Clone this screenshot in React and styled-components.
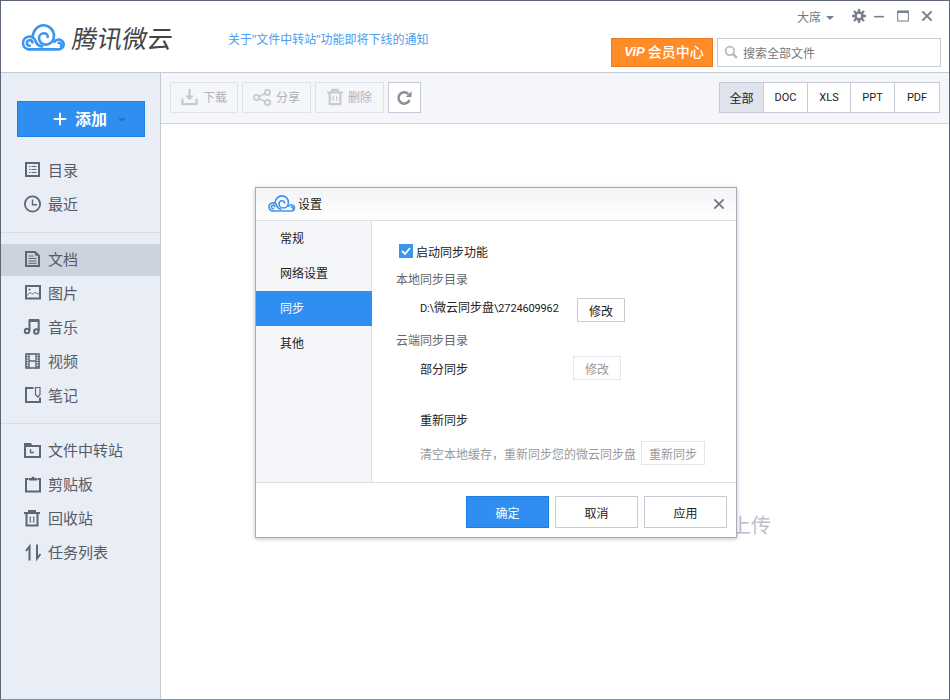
import React from 'react'
import styled, { createGlobalStyle } from 'styled-components'

const GlobalStyle = createGlobalStyle`
  html, body {
    margin: 0;
    padding: 0;
    background: #fff;
  }
  * {
    box-sizing: border-box;
  }
`

const CloudLogo = ({ width }) => (
  <svg width={width} viewBox="0 0 43 27" fill="none" stroke="#3c95ee" strokeWidth="2.6" strokeLinecap="round" style={{ overflow: 'visible' }}>
    <path d="M6.5 25.4H36.5a5 5 0 1 0-5-7.6" />
    <path d="M38 22.400a2.200 2.200 0 0 0-2.400-3.400" />
    <path d="M9.500 13.500C10 6 15 1.300 20.500 1.300c6 0 10.500 5 10.500 10.700 0 5-3.700 8.700-8 8.700-4 0-7-3-7-6.500 0-3 2.400-5 4.800-5 2.300 0 3.900 1.700 3.900 3.700" />
    <path d="M6.500 25.400a6.400 6.400 0 1 1 6-8.400c1 3 3.500 5 6.500 5.600" />
    <path d="M6.700 21.800a2.800 2.800 0 1 1 2.700-3.400" />
  </svg>
)

const Glyph = ({ size = 18, children, color = '#5f6675', sw = 2 }) => (
  <svg width={size} height={size} viewBox="0 0 18 18" fill="none" stroke={color} strokeWidth={sw} style={{ overflow: 'visible', flexShrink: 0 }}>
    {children}
  </svg>
)

const C = '#5f6675'

const icons = {
  list: <><rect x="2" y="2" width="13" height="13" /><path d="M5 5.500h1.500M5 8.500h1.500M5 11.500h1.500M7.500 5.500h5M7.500 8.500h5M7.500 11.500h5" strokeWidth="1" /></>,
  clock: <><circle cx="8.500" cy="9" r="7.600" strokeWidth="1.800" /><path d="M8.500 4.500v5.300H13" strokeWidth="1.400" /></>,
  doc: <><path d="M2 2h8.500L15 6v10H2z" /><path d="M11 .8l5 4.700h-5z" fill={C} stroke="none" /><path d="M4.500 6h5M4.500 8.500h8M4.500 11h8M4.500 13.300h8" strokeWidth="1" /></>,
  image: <><rect x="2" y="2" width="14" height="12.500" /><path d="M3.500 11.500c1-1 1.500-3 2.500-3s1.500 1.500 2.500 1.500 1.500-1.500 2.500-1.500 2 1.500 4 1.500" strokeWidth="1" /><circle cx="5.500" cy="5.500" r="1" fill={C} stroke="none" /></>,
  music: <><path d="M5.500 13V2.500h9.200V13" /><path d="M5 2.500h10" strokeWidth="3" /><circle cx="3" cy="13" r="2.200" /><circle cx="12.300" cy="13.500" r="2.200" /></>,
  film: <><rect x="2" y="2" width="13" height="14" strokeWidth="1.600" /><path d="M5 1.500v15M12 1.500v15M5 9h7" strokeWidth="1.400" /><path d="M1.500 4.500h3M1.500 7h3M1.500 9.500h3M1.500 12h3M1.500 14.500h3M12.500 4.500h3M12.500 7h3M12.500 9.500h3M12.500 12h3M12.500 14.500h3" strokeWidth="1" /></>,
  note: <><path d="M9.500 2H2v14h14v-4.500" /><path d="M11.500 1.500h4.500v7l-2.250 2.500-2.250-2.500z" strokeWidth="1.200" /></>,
  folder: <><path d="M1 5h15v11H1z" /><path d="M0 2h7l2 3.500H0z" fill={C} stroke="none" /><path d="M6.500 8v3.500h3.500" strokeWidth="1.300" /></>,
  clip: <><path d="M4.500 4H2v12.500h14V4h-2.500" /><path d="M5 5.500V3h2.500a1.500 1.500 0 0 1 3 0H13v2.500z" fill={C} stroke="none" /></>,
  trash: <><path d="M0 4h16M5 4V2h6v2M2.500 4v12.500h11V4" /><path d="M6.300 7.500v6M9.700 7.500v6" strokeWidth="1.200" /></>,
  tasks: <><path d="M5.500 17.500V3.500L2 8" strokeWidth="2" /><path d="M13 1.500v14L16.500 11" strokeWidth="2" /></>,
}

const menuTop = [
  { icon: 'list', label: '目录' },
  { icon: 'clock', label: '最近' },
]
const menuTypes = [
  { icon: 'doc', label: '文档', active: true },
  { icon: 'image', label: '图片' },
  { icon: 'music', label: '音乐' },
  { icon: 'film', label: '视频' },
  { icon: 'note', label: '笔记' },
]
const menuTools = [
  { icon: 'folder', label: '文件中转站' },
  { icon: 'clip', label: '剪贴板' },
  { icon: 'trash', label: '回收站' },
  { icon: 'tasks', label: '任务列表' },
]

const MenuGroup = ({ items }) => (
  <Group>
    {items.map((item) => (
      <MenuItem key={item.label} $active={item.active}>
        <Glyph>{icons[item.icon]}</Glyph>
        <MenuLabel>{item.label}</MenuLabel>
      </MenuItem>
    ))}
  </Group>
)

const App = () => {
  return (
    <Window>
      <GlobalStyle />
      <Header>
        <LogoBox>
          <CloudLogo width={43} />
          <LogoText>腾讯微云</LogoText>
        </LogoBox>
        <Notice>关于"文件中转站"功能即将下线的通知</Notice>
        <HeaderRight>
          <WinBar>
            <UserName>大席</UserName>
            <Caret />
            <WinButtons>
              <Glyph size={14} color="#7a808c" sw={3.5}>
                <circle cx="9" cy="9" r="4.500" />
                <path d="M9 0v4M9 14v4M0 9h4M14 9h4M2.600 2.600l2.800 2.800M12.600 12.600l2.800 2.800M2.600 15.400l2.800-2.800M12.600 5.400l2.800-2.800" strokeWidth="3" />
              </Glyph>
              <Glyph size={12} color="#7a808c" sw={2.400}><path d="M0 10h15" /></Glyph>
              <Glyph size={12} color="#7a808c" sw={1.600}><rect x="1" y="1.500" width="16" height="15" /><path d="M1 3h16" strokeWidth="3" /></Glyph>
              <Glyph size={12} color="#7a808c" sw={3}><path d="M2 2l14 14M16 2L2 16" /></Glyph>
            </WinButtons>
          </WinBar>
          <ActionBar>
            <VipButton><VipMark>ViP</VipMark>会员中心</VipButton>
            <SearchBox>
              <Glyph size={14} color="#b5b8bf" sw={2.200}><circle cx="7.500" cy="7.500" r="5.500" /><path d="M11.500 11.500l5 5" strokeWidth="3" /></Glyph>
              <span>搜索全部文件</span>
            </SearchBox>
          </ActionBar>
        </HeaderRight>
      </Header>
      <Body>
        <Sidebar>
          <AddButton>
            <Glyph size={14} color="#fff" sw={2.400}><path d="M9 1v16M1 9h16" /></Glyph>
            <AddLabel>添加</AddLabel>
            <AddCaret />
          </AddButton>
          <MenuGroup items={menuTop} />
          <MenuGroup items={menuTypes} />
          <MenuGroup items={menuTools} />
        </Sidebar>
        <Main>
          <Toolbar>
            <ToolButton $w={68}>
              <Glyph size={17} color="#c6c9cf" sw={2.400}><path d="M1.500 11v6h15v-6" /><path d="M9 1v9" /><path d="M4.500 8h9L9 13z" fill="#c6c9cf" stroke="none" /></Glyph>
              下载
            </ToolButton>
            <ToolButton>
              <Glyph color="#c6c9cf" sw={1.800}><circle cx="3.500" cy="9.500" r="2.600" /><circle cx="14.500" cy="4.500" r="2.600" /><circle cx="14.500" cy="14.500" r="2.600" /><path d="M6 8.500l6-3M6 10.500l6 3" strokeWidth="1.400" /></Glyph>
              分享
            </ToolButton>
            <ToolButton>
              <Glyph size={16} color="#c6c9cf" sw={2.400}><path d="M0 4h18M6 3.500V1h6v2.500M3 4v13h12V4" /><path d="M7 7.500v6M11 7.500v6" strokeWidth="1.400" /></Glyph>
              删除
            </ToolButton>
            <RefreshButton>
              <Glyph size={15} color="#8b8f98" sw={3}>
                <path d="M15 12A6.800 6.800 0 1 1 13.500 4.800" />
                <path d="M17.500 1.500V8.500h-7z" fill="#8b8f98" stroke="none" />
              </Glyph>
            </RefreshButton>
            <FilterGroup>
              <FilterTab $active $w={45}>全部</FilterTab>
              <FilterTab $w={45}>DOC</FilterTab>
              <FilterTab $w={44}>XLS</FilterTab>
              <FilterTab $w={45}>PPT</FilterTab>
              <FilterTab $w={46}>PDF</FilterTab>
            </FilterGroup>
          </Toolbar>
          <Empty>
            <EmptyText>上传</EmptyText>
          </Empty>
        </Main>
      </Body>

      <Dialog>
        <DialogTitle>
          <CloudLogo width={27} />
          <span>设置</span>
          <DialogClose>
            <Glyph size={12} color="#6f7682" sw={2.600}><path d="M2 2l14 14M16 2L2 16" /></Glyph>
          </DialogClose>
        </DialogTitle>
        <DialogBody>
          <DialogNav>
            <NavItem>常规</NavItem>
            <NavItem>网络设置</NavItem>
            <NavItem $active>同步</NavItem>
            <NavItem>其他</NavItem>
          </DialogNav>
          <DialogContent>
            <CheckRow>
              <CheckBox>
                <svg width="10" height="10" viewBox="0 0 10 10" fill="none" stroke="#fff" strokeWidth="1.800">
                  <path d="M1 5l3 3 5-6" />
                </svg>
              </CheckBox>
              启动同步功能
            </CheckRow>
            <SectionLabel>本地同步目录</SectionLabel>
            <PathRow>
              <PathText><Latin>D:\</Latin>微云同步盘<Latin>\2724609962</Latin></PathText>
              <SmallButton>修改</SmallButton>
            </PathRow>
            <SectionLabel $top={9}>云端同步目录</SectionLabel>
            <PartRow>
              <PartLabel>部分同步</PartLabel>
              <SmallButton $disabled>修改</SmallButton>
            </PartRow>
            <ResyncTitle>重新同步</ResyncTitle>
            <ResyncRow>
              <ResyncHint>清空本地缓存，重新同步您的微云同步盘</ResyncHint>
              <SmallButton $disabled $w={64}>重新同步</SmallButton>
            </ResyncRow>
          </DialogContent>
        </DialogBody>
        <DialogFooter>
          <FooterButton $primary>确定</FooterButton>
          <FooterButton>取消</FooterButton>
          <FooterButton>应用</FooterButton>
        </DialogFooter>
      </Dialog>
    </Window>
  )
}

const Window = styled.div`
  position: relative;
  width: 950px;
  height: 700px;
  overflow: hidden;
  display: flex;
  flex-direction: column;
  border: 1px solid #5d6676;
  border-bottom-color: #8b919c;
  background: #fff;
  font-family: "Noto Sans CJK SC", "Noto Sans", sans-serif;
  font-size: 12px;
  color: #333;
`

const Header = styled.header`
  height: 72px;
  flex-shrink: 0;
  display: flex;
  border-bottom: 1px solid #c6cad4;
  background: #fff;
`

const LogoBox = styled.div`
  width: 227px;
  padding: 23px 0 0 22px;
  display: flex;
  align-items: flex-start;
  gap: 7px;
`

const LogoText = styled.div`
  font-size: 25px;
  line-height: 28px;
  margin-top: -1px;
  color: #444;
  transform: skewX(-10deg);
`

const Notice = styled.div`
  padding-top: 30px;
  color: #4d9cf0;
  line-height: 18px;
  flex: 1;
  font-family: "Liberation Sans", "Noto Sans CJK SC", sans-serif;
`

const HeaderRight = styled.div`
  display: flex;
  flex-direction: column;
  align-items: flex-end;
  padding: 6px 8px 0 0;
`

const WinBar = styled.div`
  height: 20px;
  display: flex;
  align-items: center;
  color: #777;
`

const UserName = styled.span`
  line-height: 20px;
`

const Caret = styled.i`
  margin: 1px 0 0 5px;
  border-left: 4px solid transparent;
  border-right: 4px solid transparent;
  border-top: 4px solid #7a808c;
`

const WinButtons = styled.div`
  display: flex;
  align-items: center;
  gap: 11px;
  margin: -3px 8px 0 18px;
  & > svg:first-child {
    margin-right: -3px;
  }
  & > svg:last-child {
    margin-left: 1px;
  }
`

const ActionBar = styled.div`
  display: flex;
  gap: 4px;
  margin-top: 11px;
`

const VipButton = styled.div`
  width: 102px;
  height: 29px;
  display: flex;
  align-items: center;
  justify-content: center;
  gap: 3px;
  padding: 0 0 3px 4px;
  background: #ff8c27;
  border: 1px solid #ea7a1d;
  color: #fff;
  font-size: 14px;
  font-weight: 500;
`

const VipMark = styled.span`
  font-family: "Liberation Sans", sans-serif;
  font-style: italic;
  font-weight: bold;
  font-size: 13px;
`

const SearchBox = styled.div`
  width: 224px;
  height: 29px;
  display: flex;
  align-items: center;
  gap: 5px;
  padding: 0 0 1px 6px;
  border: 1px solid #c8ccd6;
  color: #777;
`

const Body = styled.div`
  flex: 1;
  display: flex;
  min-height: 0;
`

const Sidebar = styled.aside`
  width: 160px;
  flex-shrink: 0;
  padding-top: 28px;
  background: #e9edf5;
  border-right: 1px solid #c6cad4;
`

const AddButton = styled.div`
  width: 128px;
  height: 36px;
  margin: 0 0 18px 16px;
  display: flex;
  align-items: center;
  gap: 8px;
  padding-left: 35px;
  background: #2f8ff0;
  border: 1px solid #1f7fdf;
  color: #fff;
  font-size: 16px;
  font-weight: 700;
`

const AddLabel = styled.span`
  margin-bottom: 3px;
`

const AddCaret = styled.i`
  margin: 2px 0 0 3px;
  border-left: 4px solid transparent;
  border-right: 4px solid transparent;
  border-top: 4px solid #1f75cf;
`

const Group = styled.div`
  padding-bottom: 9px;
  margin-bottom: 11px;
  border-bottom: 1px solid #d8dce5;
  &:last-child {
    border-bottom: 0;
  }
`

const MenuItem = styled.div`
  height: 32px;
  margin-bottom: 2px;
  display: flex;
  align-items: center;
  gap: 6px;
  padding: 0 0 2px 23px;
  font-size: 15px;
  color: #555b66;
  background: ${(p) => (p.$active ? '#cdd3de' : 'transparent')};
`

const MenuLabel = styled.span`
  margin-bottom: 2px;
`

const Main = styled.main`
  flex: 1;
  display: flex;
  flex-direction: column;
  min-width: 0;
`

const Toolbar = styled.div`
  height: 51px;
  flex-shrink: 0;
  display: flex;
  align-items: flex-start;
  gap: 4px;
  padding: 9px 9px 0 9px;
  background: #f4f6fa;
  border-bottom: 1px solid #d1d5de;
`

const ToolButton = styled.div`
  width: ${(p) => p.$w ?? 69}px;
  height: 31px;
  display: flex;
  align-items: center;
  justify-content: center;
  gap: 5px;
  padding-bottom: 2px;
  border: 1px solid #dfe2e8;
  color: #b0b3ba;
`

const RefreshButton = styled.div`
  width: 33px;
  height: 31px;
  display: flex;
  align-items: center;
  justify-content: center;
  background: #fff;
  border: 1px solid #c6cad4;
`

const FilterGroup = styled.div`
  margin-left: auto;
  display: flex;
`

const FilterTab = styled.div`
  width: ${(p) => p.$w}px;
  height: 31px;
  display: flex;
  align-items: center;
  justify-content: center;
  background: ${(p) => (p.$active ? '#dfe3eb' : '#fff')};
  border: 1px solid #c6cad4;
  margin-left: -1px;
  color: #222;
  font-size: ${(p) => (p.$active ? '12px' : '11px')};
  font-family: ${(p) => (p.$active ? 'inherit' : 'Roboto, sans-serif')};
  &:first-child {
    margin-left: 0;
  }
`

const Empty = styled.div`
  flex: 1;
  display: flex;
  justify-content: flex-end;
  padding: 388px 178px 0 0;
`

const EmptyText = styled.div`
  font-size: 20px;
  line-height: 26px;
  height: 26px;
  color: #bcc0c8;
`

const Dialog = styled.div`
  position: absolute;
  left: 254px;
  top: 186px;
  width: 482px;
  height: 351px;
  display: flex;
  flex-direction: column;
  background: #fff;
  border: 1px solid #a9adb9;
  box-shadow: 0 1px 4px rgba(0, 0, 0, 0.25);
`

const DialogTitle = styled.div`
  height: 33px;
  flex-shrink: 0;
  display: flex;
  align-items: center;
  gap: 2px;
  padding: 0 0 1px 13px;
  background: linear-gradient(#f3f4f6, #fff);
  border-bottom: 1px solid #dcdfe5;
  color: #222;
`

const DialogClose = styled.div`
  margin-left: auto;
  margin-right: 11px;
  display: flex;
`

const DialogBody = styled.div`
  flex: 1;
  display: flex;
  min-height: 0;
`

const DialogNav = styled.nav`
  width: 116px;
  flex-shrink: 0;
  background: #f4f6fa;
  border-right: 1px solid #dde0e8;
`

const NavItem = styled.div`
  height: 35px;
  display: flex;
  align-items: center;
  padding: 0 0 2px 24px;
  margin-right: ${(p) => (p.$active ? '-1px' : '0')};
  color: ${(p) => (p.$active ? '#fff' : '#222')};
  background: ${(p) => (p.$active ? '#2f8ff0' : 'transparent')};
`

const DialogContent = styled.div`
  flex: 1;
  padding: 21px 0 0 24px;
`

const CheckRow = styled.div`
  height: 18px;
  display: flex;
  align-items: center;
  gap: 3px;
  margin-left: 3px;
  color: #222;
`

const CheckBox = styled.span`
  width: 14px;
  height: 14px;
  display: flex;
  align-items: center;
  justify-content: center;
  background: #3a94ec;
`

const SectionLabel = styled.div`
  line-height: 18px;
  margin-top: ${(p) => p.$top ?? 10}px;
  color: #666;
`

const PathRow = styled.div`
  height: 24px;
  margin-top: 10px;
  display: flex;
  align-items: center;
  padding-left: 24px;
`

const PathText = styled.span`
  width: 157px;
  color: #222;
  margin-top: -7px;
`

const Latin = styled.span`
  font-family: Roboto, sans-serif;
  font-size: 11px;
  letter-spacing: -0.15px;
`

const PartRow = styled.div`
  height: 24px;
  margin-top: 7px;
  display: flex;
  align-items: center;
  padding-left: 24px;
`

const PartLabel = styled.span`
  width: 153px;
  color: #222;
`

const SmallButton = styled.div`
  width: ${(p) => p.$w ?? 48}px;
  height: 24px;
  flex-shrink: 0;
  display: flex;
  align-items: center;
  justify-content: center;
  background: #fff;
  border: 1px solid ${(p) => (p.$disabled ? '#e4e6ea' : '#c6cad4')};
  color: ${(p) => (p.$disabled ? '#999' : '#222')};
`

const ResyncTitle = styled.div`
  line-height: 18px;
  margin: 31px 0 0 24px;
  color: #222;
`

const ResyncRow = styled.div`
  height: 24px;
  margin: 12px 0 0 24px;
  display: flex;
  align-items: center;
  gap: 5px;
`

const ResyncHint = styled.span`
  color: #999;
`

const DialogFooter = styled.div`
  height: 55px;
  flex-shrink: 0;
  display: flex;
  justify-content: flex-end;
  gap: 6px;
  padding: 13px 9px 0 0;
  border-top: 1px solid #dcdfe5;
`

const FooterButton = styled.div`
  width: 83px;
  height: 32px;
  display: flex;
  align-items: center;
  justify-content: center;
  background: ${(p) => (p.$primary ? '#2f8ff0' : '#fff')};
  border: 1px solid ${(p) => (p.$primary ? '#1f7fdf' : '#c6cad4')};
  color: ${(p) => (p.$primary ? '#fff' : '#222')};
`

export default App
